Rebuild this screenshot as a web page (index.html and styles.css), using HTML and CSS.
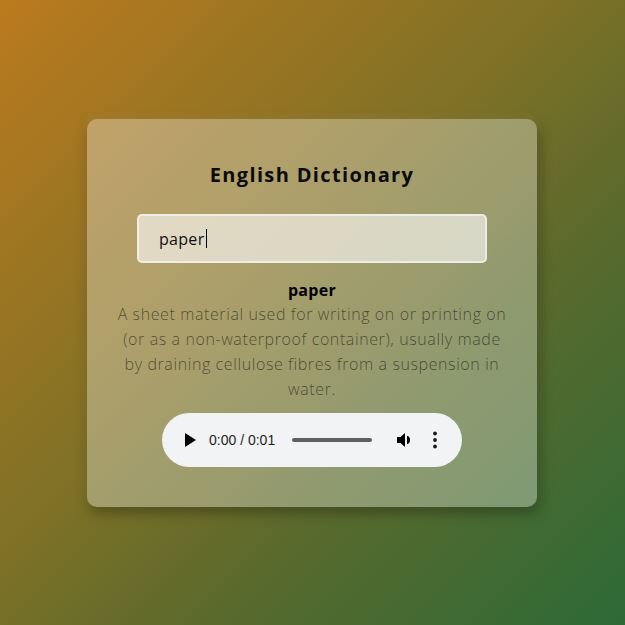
FILE: index.html
```html
<!DOCTYPE html>
<html lang="en">
<head>
<meta charset="utf-8">
<title>English Dictionary</title>
<link rel="stylesheet" href="styles.css">
</head>
<body>
<main class="card">
  <h1 class="title">English Dictionary</h1>
  <div class="search">
    <span class="search-text">paper</span><span class="caret"></span>
  </div>
  <section class="result">
    <h2 class="word">paper</h2>
    <p class="meaning">A sheet material used for writing on or printing on<br>(or as a non-waterproof container), usually made<br>by draining cellulose fibres from a suspension in<br>water.</p>
  </section>
  <div class="player">
    <svg class="play" width="24" height="24" viewBox="0 0 24 24"><path d="M8 5v14l11-7z"/></svg>
    <span class="time">0:00 / 0:01</span>
    <span class="track"></span>
    <svg class="volume" width="18" height="18" viewBox="0 0 18 18"><path d="M1 6h3.5L9 2v14l-4.5-4H1z"/><path d="M11 4.8a4.4 4.4 0 0 1 0 8.4z"/></svg>
    <svg class="more" width="6" height="20" viewBox="0 0 6 20"><circle cx="3" cy="3.5" r="1.9"/><circle cx="3" cy="10" r="1.9"/><circle cx="3" cy="16.5" r="1.9"/></svg>
  </div>
</main>
</body>
</html>
```

FILE: styles.css
```css
* { box-sizing: border-box; }

html, body {
  margin: 0;
  height: 100%;
}

body {
  display: flex;
  align-items: center;
  justify-content: center;
  min-height: 100vh;
  background: linear-gradient(135deg, #bb7a1e 0%, #7e7126 45%, #5c6a2c 65%, #2c6a37 100%);
  font-family: "Open Sans", "Noto Sans", sans-serif;
}

.card {
  width: 450px;
  margin: 1px 1px 0 0;
  padding: 41px 0 40px;
  display: flex;
  flex-direction: column;
  align-items: center;
  background: rgba(255, 255, 255, 0.32);
  border-radius: 10px;
  box-shadow: 2px 5px 14px rgba(0, 0, 0, 0.35), 0 -2px 10px rgba(255, 230, 160, 0.15);
}

.title {
  margin: 0;
  font-size: 20px;
  line-height: 30px;
  font-weight: 700;
  letter-spacing: 1.35px;
  color: #0b0b0b;
}

.search {
  margin-top: 24px;
  width: 350px;
  height: 49px;
  display: flex;
  align-items: center;
  padding-left: 20px;
  background: rgba(255, 255, 255, 0.6);
  border: 2px solid rgba(255, 255, 255, 0.55);
  border-radius: 5px;
}

.search-text {
  font-size: 16px;
  letter-spacing: 0.3px;
  color: #111;
}

.caret {
  width: 1px;
  height: 19px;
  margin-left: 1px;
  background: #000;
}

.result {
  margin-top: 15px;
  display: flex;
  flex-direction: column;
  align-items: center;
  text-align: center;
}

.word {
  margin: 0;
  font-size: 16px;
  line-height: 24px;
  font-weight: 700;
  letter-spacing: 0.3px;
  color: #000;
}

.meaning {
  margin: 0;
  font-size: 16px;
  line-height: 25px;
  font-weight: 300;
  letter-spacing: 0.6px;
  color: rgba(0, 0, 0, 0.55);
}

.player {
  margin-top: 11px;
  width: 300px;
  height: 54px;
  display: flex;
  align-items: center;
  padding-left: 15px;
  background: #f1f3f4;
  border-radius: 27px;
}

.play {
  fill: #000;
}

.time {
  margin-left: 8px;
  font-family: "Liberation Sans", Arial, sans-serif;
  font-size: 14px;
  color: #1f1f1f;
}

.track {
  margin-left: 17px;
  width: 80px;
  height: 4px;
  border-radius: 2px;
  background: #5f5f5f;
}

.volume {
  margin-left: 24px;
  fill: #000;
}

.more {
  margin-left: 18px;
  fill: #1a1a1a;
}
```
